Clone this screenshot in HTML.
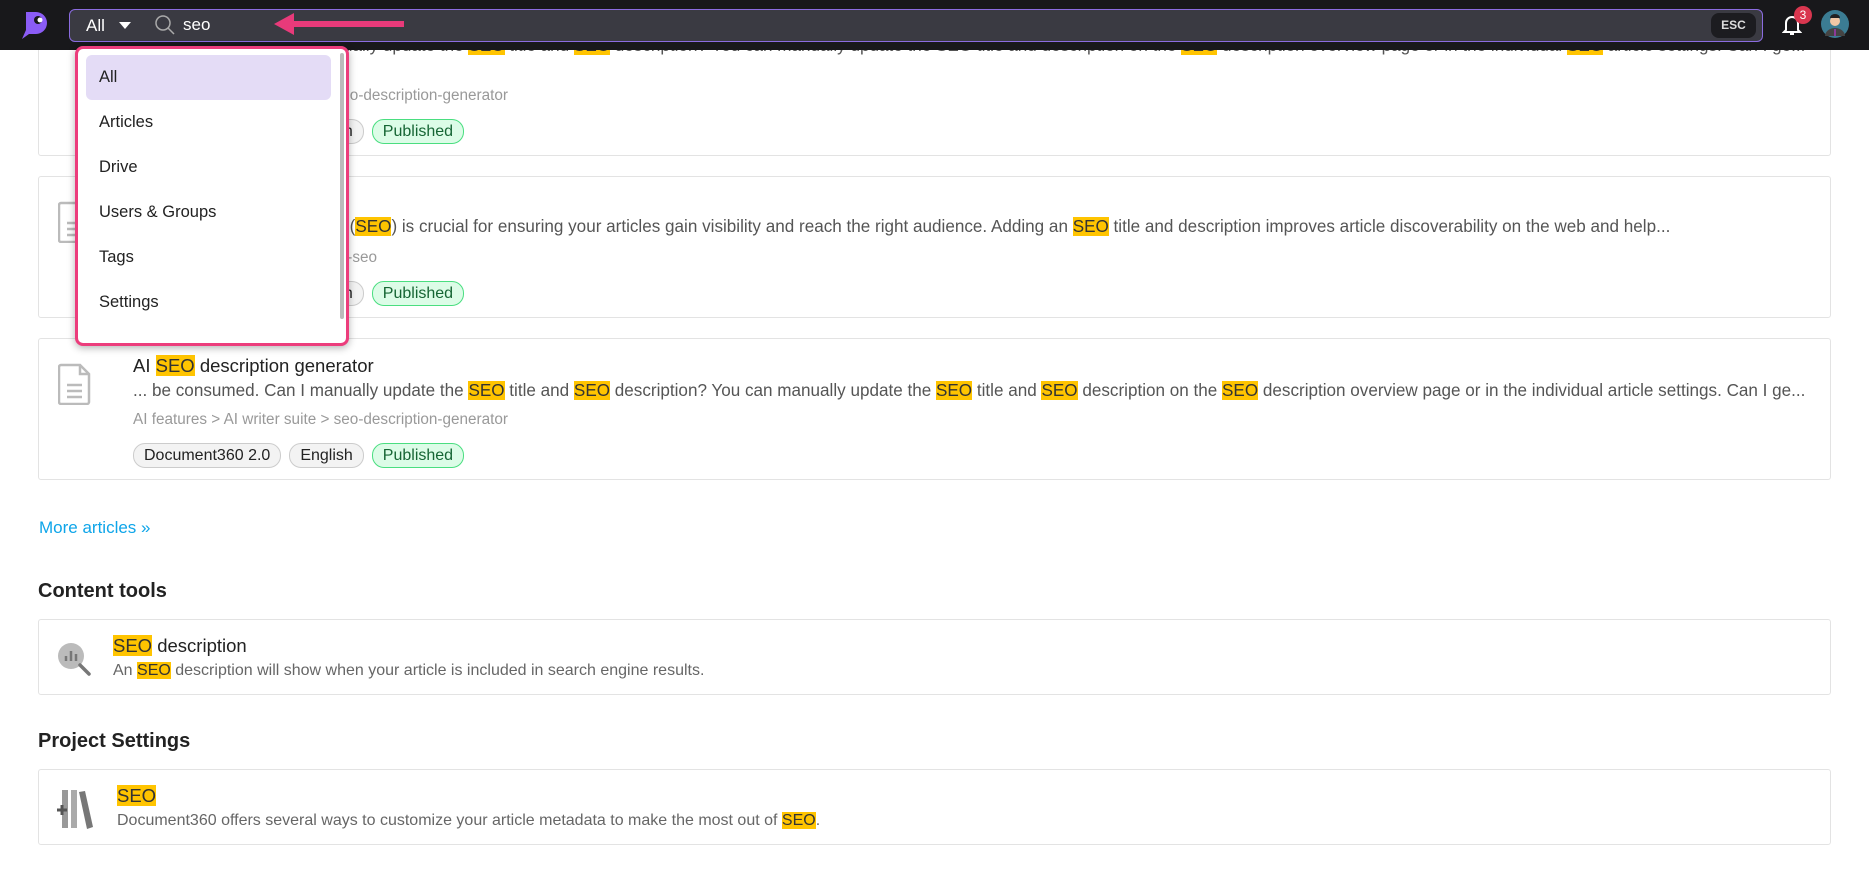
<!DOCTYPE html>
<html><head><meta charset="utf-8"><style>
*{box-sizing:border-box;margin:0;padding:0}
body{width:1869px;height:889px;overflow:hidden;background:#fff;font-family:"Liberation Sans",sans-serif;color:#1f1f1f;position:relative}
.abs{position:absolute}
.hdr{left:0;top:0;width:1869px;height:50px;background:#18181b}
.search{left:69px;top:9px;width:1694px;height:33px;background:#3a3a42;border:1.5px solid #8b6ce0;border-radius:6px}
.card{position:absolute;left:38px;width:1793px;border:1px solid #e3e3e3;border-radius:3px;background:#fff}
.hl{background:#ffc400;color:#333}
.t{position:absolute;white-space:nowrap}
.title{font-size:18.5px;color:#222}
.desc{font-size:17.1px;color:#555}
.path{font-size:15.3px;color:#999}
.tag{display:inline-block;height:25px;line-height:23px;padding:0 10px;border:1px solid #ccc;border-radius:12px;background:#f3f3f3;font-size:16px;color:#222;margin-right:8px;vertical-align:middle}
.pub{background:#dcfce7;border-color:#4ade80;color:#166534}
.doc{position:absolute;left:19px;width:33px;height:42px}
h2{position:absolute;left:38px;font-size:20px;font-weight:bold;color:#222}
.dd{left:75px;top:46px;width:274px;height:300px;background:#fff;border:3px solid #ec3d7c;border-radius:8px;box-shadow:0 2px 8px rgba(0,0,0,.3);overflow:hidden}
.dd div{position:absolute;left:8px;width:245px;height:45px;line-height:45px;padding-left:13px;font-size:16.5px;color:#222}
</style></head><body>

<div class="card" style="top:13px;height:143px">
 <div class="t desc" style="left:94px;top:22px">... be consumed. Can I manually update the <span class="hl">SEO</span> title and <span class="hl">SEO</span> description? You can manually update the SEO title and description on the <span class="hl">SEO</span> description overview page or in the individual <span class="hl">SEO</span> article settings. Can I ge...</div>
 <div class="t path" style="left:94px;top:73px">AI features &gt; AI writer suite &gt; seo-description-generator</div>
 <div class="t" style="left:94px;top:105px"><span class="tag">Document360 2.0</span><span class="tag">English</span><span class="tag pub">Published</span></div>
</div>

<div class="card" style="top:176px;height:142px">
 <svg class="doc" style="top:24px" viewBox="0 0 33 42"><path d="M3 2h19l9 9v28a2 2 0 0 1-2 2H3a2 2 0 0 1-2-2V4a2 2 0 0 1 2-2z" fill="none" stroke="#bbb" stroke-width="2.5"/><path d="M9 22h15M9 28h15M9 34h15" stroke="#bbb" stroke-width="2.5"/></svg>
 <div class="t title" style="left:94px;top:16px">SEO settings</div>
 <div class="t desc" style="left:94px;top:40px">Search Engine Optimization (<span class="hl">SEO</span>) is crucial for ensuring your articles gain visibility and reach the right audience. Adding an <span class="hl">SEO</span> title and description improves article discoverability on the web and help...</div>
 <div class="t path" style="left:94px;top:72px">Editor &gt; Article settings &gt; article-seo</div>
 <div class="t" style="left:94px;top:104px"><span class="tag">Document360 2.0</span><span class="tag">English</span><span class="tag pub">Published</span></div>
</div>

<div class="card" style="top:338px;height:142px">
 <svg class="doc" style="top:24px" viewBox="0 0 33 42"><path d="M3 2h19l9 9v28a2 2 0 0 1-2 2H3a2 2 0 0 1-2-2V4a2 2 0 0 1 2-2z" fill="none" stroke="#bbb" stroke-width="2.5"/><path d="M22 2v9h9" fill="none" stroke="#bbb" stroke-width="2.5"/><path d="M9 22h15M9 28h15M9 34h15" stroke="#bbb" stroke-width="2.5"/></svg>
 <div class="t title" style="left:94px;top:16px">AI <span class="hl">SEO</span> description generator</div>
 <div class="t desc" style="left:94px;top:42px">... be consumed. Can I manually update the <span class="hl">SEO</span> title and <span class="hl">SEO</span> description? You can manually update the <span class="hl">SEO</span> title and <span class="hl">SEO</span> description on the <span class="hl">SEO</span> description overview page or in the individual article settings. Can I ge...</div>
 <div class="t path" style="left:94px;top:72px">AI features &gt; AI writer suite &gt; seo-description-generator</div>
 <div class="t" style="left:94px;top:104px"><span class="tag">Document360 2.0</span><span class="tag">English</span><span class="tag pub">Published</span></div>
</div>

<div class="t" style="left:39px;top:518px;font-size:17px;color:#0ea5e9">More articles »</div>

<h2 style="top:580px">Content tools</h2>
<div class="card" style="top:619px;height:76px">
 <svg class="abs" style="left:18px;top:22px" width="36" height="36" viewBox="0 0 36 36"><circle cx="14" cy="14" r="13" fill="#bbb"/><path d="M9 19v-5M14 19V9M19 19v-7" stroke="#777" stroke-width="2.5"/><path d="M23 23l9 9" stroke="#777" stroke-width="3.5" stroke-linecap="round"/></svg>
 <div class="t title" style="left:74px;top:15px"><span class="hl">SEO</span> description</div>
 <div class="t" style="left:74px;top:42px;font-size:16px;color:#666">An <span class="hl">SEO</span> description will show when your article is included in search engine results.</div>
</div>

<h2 style="top:730px">Project Settings</h2>
<div class="card" style="top:769px;height:76px">
 <svg class="abs" style="left:18px;top:20px" width="40" height="40" viewBox="0 0 40 40"><rect x="5" y="0" width="6" height="38" fill="#999"/><rect x="14" y="0" width="6" height="38" fill="#aaa"/><path d="M22 2l6-1 8 36-6 2z" fill="#777"/><path d="M0 20h10M5 15v10" stroke="#555" stroke-width="3"/></svg>
 <div class="t title" style="left:78px;top:15px"><span class="hl">SEO</span></div>
 <div class="t" style="left:78px;top:42px;font-size:16px;color:#666">Document360 offers several ways to customize your article metadata to make the most out of <span class="hl">SEO</span>.</div>
</div>

<div class="abs hdr"></div>
<svg class="abs" style="left:20px;top:10px" width="30" height="30" viewBox="0 0 30 30"><path d="M6 2h10a11 11 0 0 1 0 22H9l-7 5 4-9V2z" fill="#8b5cf6"/><circle cx="18" cy="10" r="4" fill="#18181b"/><circle cx="20" cy="10" r="2.5" fill="#fff"/></svg>
<div class="abs search"></div>
<div class="t" style="left:86px;top:16px;font-size:17px;color:#fff">All</div>
<svg class="abs" style="left:118px;top:21px" width="14" height="9"><path d="M1 1h12L7 8z" fill="#fff"/></svg>
<svg class="abs" style="left:154px;top:14px" width="22" height="22" viewBox="0 0 22 22"><circle cx="9" cy="9" r="7" fill="none" stroke="#aaa" stroke-width="1.5"/><path d="M14 14l6 6" stroke="#aaa" stroke-width="1.5"/></svg>
<div class="t" style="left:183px;top:15px;font-size:17px;color:#fff">seo</div>
<svg class="abs" style="left:272px;top:12px" width="132" height="24"><path d="M10 12H400" stroke="#e83a7a" stroke-width="6" stroke-linecap="round"/><path d="M2 12l20-11v22z" fill="#e83a7a"/></svg>
<div class="abs" style="left:1711px;top:13px;width:45px;height:25px;background:#1c1c20;border-radius:8px;color:#ddd;font-size:12px;font-weight:bold;line-height:25px;text-align:center">ESC</div>
<svg class="abs" style="left:1782px;top:14px" width="20" height="22" viewBox="0 0 20 22"><path d="M4 16V9a6 6 0 0 1 12 0v7l2 2H2z" fill="none" stroke="#fff" stroke-width="2"/><path d="M8 20h4" stroke="#fff" stroke-width="2"/></svg>
<div class="abs" style="left:1794px;top:6px;width:18px;height:18px;border-radius:9px;background:#d9364f;color:#fff;font-size:12px;text-align:center;line-height:18px">3</div>
<svg class="abs" style="left:1821px;top:10px" width="28" height="28" viewBox="0 0 28 28"><circle cx="14" cy="14" r="14" fill="#3b7c93"/><circle cx="14" cy="11" r="5" fill="#f1c7a5"/><path d="M9 8a5 4 0 0 1 10 0z" fill="#222"/><path d="M4 26a10 8 0 0 1 20 0z" fill="#444"/><path d="M13 19h2v7h-2z" fill="#8b3a9a"/></svg>

<div class="abs dd">
 <div style="top:6px;background:#e4dcf6;border-radius:6px">All</div>
 <div style="top:51px">Articles</div>
 <div style="top:96px">Drive</div>
 <div style="top:141px">Users &amp; Groups</div>
 <div style="top:186px">Tags</div>
 <div style="top:231px">Settings</div>
 <span style="position:absolute;right:2px;top:4px;width:4px;height:266px;background:#bbb;border-radius:2px"></span>
</div>
</body></html>
